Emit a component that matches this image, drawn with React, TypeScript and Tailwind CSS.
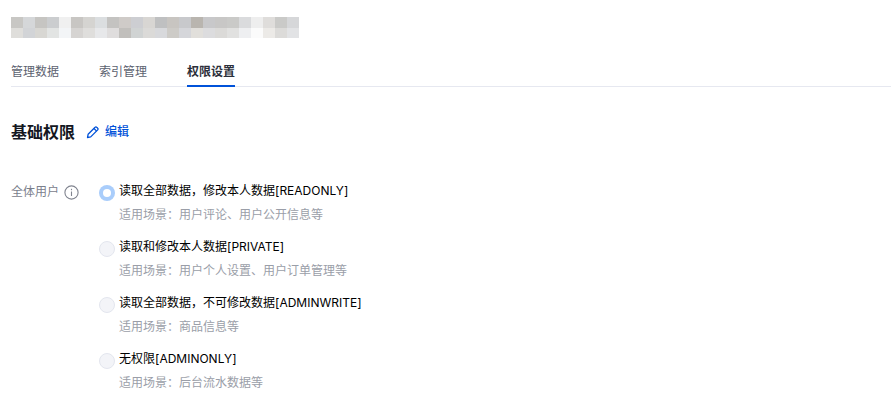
const topRow = ['#c8c7c4', '#d5d7d9', '#c6c5c2', '#cbcdcf', '#f0f0f0', '#c8c6c3', '#d5d4d1', '#dbdee0', '#c4c3c1', '#cfcbc8', '#cdced2', '#d8d6d3', '#bfc0c1', '#c8c5c1', '#c8c9cc', '#b9b5af', '#c8c8ca', '#c8c7c6', '#cacac8', '#dadbdd', '#eeeeee', '#dfdddb', '#cacac8', '#d6d7d9'];
const bottomRow = ['#dfdedb', '#d2d4d7', '#d8d7d3', '#e2e4e3', '#f3f5f7', '#d6d4d2', '#dfdedc', '#e7e8ea', '#dfdddd', '#c1bfbc', '#d0d3d3', '#dbdad8', '#d8d9dc', '#cdcbc7', '#d5d6da', '#e1dfdb', '#dcdcde', '#dbdad8', '#e1e1e0', '#eeeff1', '#fbfbfb', '#eceae7', '#dcdbd9', '#e2e3e5'];

const tabs = ['管理数据', '索引管理', '权限设置'];

const options = [
  { label: '读取全部数据，修改本人数据[READONLY]', hint: '适用场景：用户评论、用户公开信息等', checked: true },
  { label: '读取和修改本人数据[PRIVATE]', hint: '适用场景：用户个人设置、用户订单管理等', checked: false },
  { label: '读取全部数据，不可修改数据[ADMINWRITE]', hint: '适用场景：商品信息等', checked: false },
  { label: '无权限[ADMINONLY]', hint: '适用场景：后台流水数据等', checked: false },
];

function Radio({ checked }: { checked: boolean }) {
  if (checked) {
    return (
      <span className="mt-[2px] flex h-4 w-4 shrink-0 items-center justify-center rounded-full bg-[#a9cdfb]">
        <span className="h-2 w-2 rounded-full bg-white" />
      </span>
    );
  }
  return <span className="mt-[2px] h-4 w-4 shrink-0 rounded-full border border-[#e3e6ee] bg-[#f3f4f8]" />;
}

export default function App() {
  return (
    <div className="h-[414px] w-[891px] overflow-hidden bg-white font-['Inter','Noto_Sans_CJK_SC',sans-serif]">
      <div className="px-[11px] pt-[17px]">
        <div className="grid w-[288px] grid-cols-[repeat(24,12px)] grid-rows-[repeat(2,10.5px)]">
          {topRow.map((color, i) => (
            <div key={i} style={{ backgroundColor: color }} />
          ))}
          {bottomRow.map((color, i) => (
            <div key={i} style={{ backgroundColor: color }} />
          ))}
        </div>
      </div>

      <div className="mt-[20px] ml-[11px] flex gap-10 border-b border-[#e6e8f0]">
        {tabs.map((tab, i) => (
          <div
            key={tab}
            className={
              i === 2
                ? 'relative h-[28px] pt-[6px] text-xs leading-[16px] font-semibold text-[#2b2f3a]'
                : 'h-[28px] pt-[6px] text-xs leading-[16px] text-[#5c6270]'
            }
          >
            {tab}
            {i === 2 && <span className="absolute right-0 -bottom-px left-0 h-[2px] bg-[#0052d9]" />}
          </div>
        ))}
      </div>

      <div className="mt-[33px] ml-[11px] flex items-center">
        <h2 className="text-base leading-[24px] font-semibold text-[#14171f]">基础权限</h2>
        <button className="ml-[11px] flex items-center gap-[5px] text-xs leading-[16px] font-medium text-[#0052d9]">
          <svg width="14" height="14" viewBox="0 0 14 14" fill="none" stroke="currentColor" strokeWidth="1.3" strokeLinejoin="round">
            <path d="M1.5 12.5l.6-3.2 7-7a1.1 1.1 0 0 1 1.6 0l1 1a1.1 1.1 0 0 1 0 1.6l-7 7z" />
            <path d="M8 3.5l2.6 2.6" />
          </svg>
          编辑
        </button>
      </div>

      <div className="mt-[39px] ml-[11px] flex">
        <div className="flex w-[89px] shrink-0 items-start gap-[5px] pt-px">
          <span className="text-xs leading-[16px] text-[#7b808c]">全体用户</span>
          <svg className="mt-px" width="15" height="15" viewBox="0 0 15 15" fill="none" stroke="#80848f" strokeWidth="1.1">
            <circle cx="7.5" cy="7.5" r="6.6" />
            <path d="M7.5 6.5v4.5" />
            <path d="M7.5 3.8v1.4" />
          </svg>
        </div>
        <div className="-ml-px flex flex-col gap-[16px]">
          {options.map(option => (
            <div key={option.label} className="flex gap-1">
              <Radio checked={option.checked} />
              <div>
                <div className="text-xs leading-[16px] text-black">{option.label}</div>
                <div className="mt-2 text-xs leading-[16px] text-[#9a9ea8]">{option.hint}</div>
              </div>
            </div>
          ))}
        </div>
      </div>
    </div>
  );
}
